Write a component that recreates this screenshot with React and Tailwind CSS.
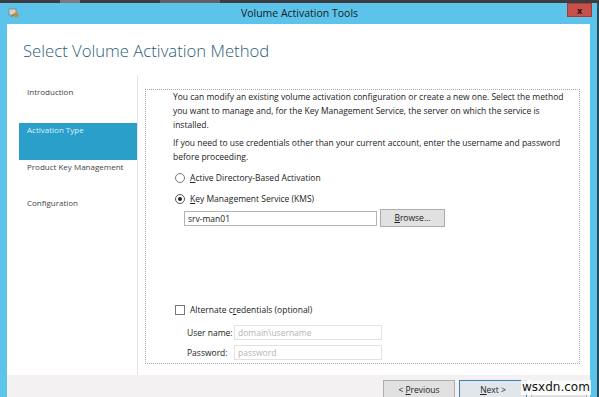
export default function App() {
    const font = { fontFamily: '"Open Sans", "Noto Sans", sans-serif' };
    return (
        <div
            className="relative w-[599px] h-[397px] overflow-hidden bg-[#5cc3ea] flex flex-col text-[#1e1e1e]"
            style={font}
        >
            {/* top strip */}
            <div className="h-[3px] bg-[#3b3d40] flex">
                <div className="w-[60px]" />
                <div className="w-[20px] bg-[#7a7c80]" />
                <div className="w-[80px]" />
                <div className="w-[60px] bg-[#5f6166]" />
            </div>

            {/* title bar */}
            <div className="relative h-[21px] flex items-center justify-center">
                <svg className="absolute left-[8px] top-[4px]" width="12" height="12" viewBox="0 0 12 12">
                    <rect x="1" y="2" width="7" height="6" fill="#d9d3c4" stroke="#8a8170" strokeWidth="0.8" />
                    <circle cx="8" cy="8" r="2.5" fill="#c98a3a" />
                    <path d="M3 10 L6 7" stroke="#6d6a60" strokeWidth="1" />
                </svg>
                <span className="text-[10.5px] text-[#1a1a1a]">Volume Activation Tools</span>
                <div className="absolute right-[7px] top-0 w-[25px] h-[14px] bg-[#c7504b] border border-[#a83a35] flex items-center justify-center">
                    <span className="text-[9px] font-bold text-[#2b1010] leading-none">x</span>
                </div>
            </div>

            {/* window body */}
            <div className="flex-1 ml-[7px] mr-[9px] bg-white flex flex-col min-h-0">
                <div className="h-[51px] pl-[16px] pt-[19px]">
                    <h1 className="text-[16.7px] font-light text-[#2d6079] leading-none">
                        Select Volume Activation Method
                    </h1>
                </div>

                <div className="flex flex-1 min-h-0">
                    {/* nav */}
                    <div className="w-[131px] border-r border-[#e4e4e4] pt-[11px] pl-[12px] text-[8px] leading-[12px] text-[#444]">
                        <div className="h-[37px] pl-[8px]">Introduction</div>
                        <div className="h-[37px] bg-[#2a9fc9] text-[#d8f3ff] pl-[8px] pt-[1px] mb-[1px]">Activation Type</div>
                        <div className="h-[36px] pl-[8px]">Product Key Management</div>
                        <div className="pl-[8px]">Configuration</div>
                    </div>

                    {/* content */}
                    <div className="flex-1 pl-[7px] pr-[10px] pt-[14px] pb-[11px]">
                        <div className="h-full border border-dotted border-[#a8a8a8] pl-[27px] pt-0 text-[8.5px] leading-[14px] text-[#222] whitespace-nowrap">
                            <p>
                                You can modify an existing volume activation configuration or create a new one. Select the method
                                <br />
                                you want to manage and, for the Key Management Service, the server on which the service is
                                <br />
                                installed.
                            </p>
                            <p className="mt-[4px]">
                                If you need to use credentials other than your current account, enter the username and password
                                <br />
                                before proceeding.
                            </p>

                            <div className="flex items-center mt-[7px] h-[14px]">
                                <span className="w-[10px] h-[10px] rounded-full border border-[#777] bg-white mr-[5px] ml-[2px]" />
                                <span><span className="underline">A</span>ctive Directory-Based Activation</span>
                            </div>
                            <div className="flex items-center mt-[7px] h-[14px]">
                                <span className="w-[10px] h-[10px] rounded-full border border-[#555] bg-white mr-[5px] ml-[2px] flex items-center justify-center">
                                    <span className="w-[4px] h-[4px] rounded-full bg-[#222]" />
                                </span>
                                <span><span className="underline">K</span>ey Management Service (KMS)</span>
                            </div>
                            <div className="flex items-center mt-[3px] ml-[11px]">
                                <div className="w-[193px] h-[15px] border border-[#b4b4b4] pl-[3px] leading-[13px]">srv-man01</div>
                                <div className="ml-[3px] w-[65px] h-[18px] border border-[#adadad] bg-[#e1e1e1] flex items-center justify-center">
                                    <span><span className="underline">B</span>rowse...</span>
                                </div>
                            </div>

                            <div className="flex items-center mt-[76px] h-[14px]">
                                <span className="w-[10px] h-[10px] border border-[#777] bg-white mr-[5px] ml-[2px]" />
                                <span>Alternate c<span className="underline">r</span>edentials (optional)</span>
                            </div>
                            <div className="flex items-center mt-[8px] ml-[14px]">
                                <span className="w-[47px]">User name:</span>
                                <div className="w-[148px] h-[15px] border border-[#e2e2e2] pl-[3px] text-[#b5b5b5] leading-[13px]">domain\username</div>
                            </div>
                            <div className="flex items-center mt-[5px] ml-[14px]">
                                <span className="w-[47px]">Password:</span>
                                <div className="w-[148px] h-[15px] border border-[#e2e2e2] pl-[3px] text-[#b5b5b5] leading-[13px]">password</div>
                            </div>
                        </div>
                    </div>
                </div>

                {/* footer */}
                <div className="h-[22px] bg-[#f3f1f2] flex items-start pt-[5px] pl-[376px] gap-[4px] text-[8.5px]">
                    <div className="w-[72px] h-[20px] border border-[#adadad] bg-[#e1e1e1] flex items-center justify-center">
                        <span>&lt; <span className="underline">P</span>revious</span>
                    </div>
                    <div className="w-[68px] h-[20px] border border-[#3c7fb1] bg-[#e1e6ea] flex items-center justify-center">
                        <span><span className="underline">N</span>ext &gt;</span>
                    </div>
                    <div className="w-[56px] h-[20px] border border-[#adadad] bg-[#e1e1e1]" />
                </div>
            </div>

            {/* right edge */}
            <div className="absolute right-0 top-[3px] bottom-0 w-[2px] bg-[#2d4a5a]" />

            {/* watermark */}
            <div className="absolute left-[521px] top-[380px] px-[1px] bg-white/85 text-[12px] leading-[15px] text-[#111]" style={{ fontFamily: '"DejaVu Sans", sans-serif' }}>
                wsxdn.com
            </div>
        </div>
    );
}
